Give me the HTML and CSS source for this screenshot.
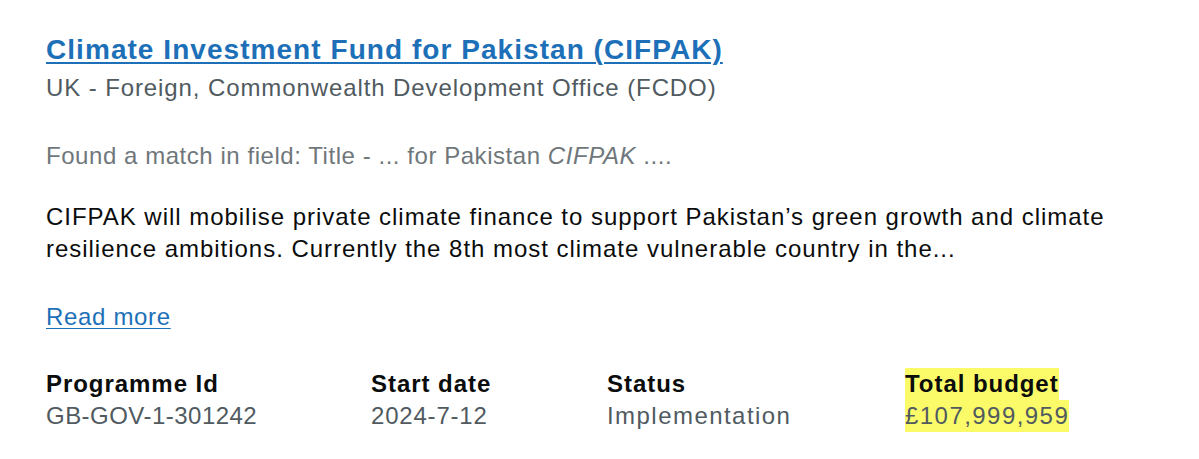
FILE: index.html
```html
<!DOCTYPE html>
<html lang="en">
<head>
<meta charset="utf-8">
<title>Climate Investment Fund for Pakistan (CIFPAK)</title>
<link rel="stylesheet" href="styles.css">
</head>
<body>
<div class="result">
  <h3 class="result-title"><a class="link" href="#">Climate Investment Fund for Pakistan (CIFPAK)</a></h3>
  <p class="result-org">UK - Foreign, Commonwealth Development Office (FCDO)</p>
  <p class="result-match">Found a match in field: Title - ... for Pakistan <em>CIFPAK</em> ....</p>
  <p class="result-desc">CIFPAK will mobilise private climate finance to support Pakistan’s green growth and climate resilience ambitions. Currently the 8th most climate vulnerable country in the...</p>
  <p class="result-more"><a class="link" href="#">Read more</a></p>
  <dl class="meta">
    <div class="meta-item">
      <dt class="meta-label">Programme Id</dt>
      <dd class="meta-value meta-value--id">GB-GOV-1-301242</dd>
    </div>
    <div class="meta-item">
      <dt class="meta-label">Start date</dt>
      <dd class="meta-value">2024-7-12</dd>
    </div>
    <div class="meta-item">
      <dt class="meta-label">Status</dt>
      <dd class="meta-value meta-value--wide">Implementation</dd>
    </div>
    <div class="meta-item meta-item--highlight">
      <dt class="meta-label"><span class="hl">Total budget</span></dt>
      <dd class="meta-value meta-value--wide"><span class="hl">£107,999,959</span></dd>
    </div>
  </dl>
</div>
</body>
</html>
```
FILE: styles.css
```css
html, body {
  margin: 0;
  padding: 0;
  background: #ffffff;
}
body {
  font-family: "Liberation Sans", Arial, sans-serif;
  color: #0b0c0c;
}
.result {
  padding: 34px 40px 0 46px;
}
.result-title {
  margin: 0;
  font-size: 28px;
  line-height: 32px;
  font-weight: 700;
  letter-spacing: 1.05px;
}
.link {
  color: #1d70b8;
  text-decoration: underline;
  text-decoration-thickness: 2px;
  text-underline-offset: 3px;
}
.result-more .link {
  text-decoration-thickness: 1px;
}
.result-org {
  margin: 6px 0 0;
  font-size: 24px;
  line-height: 32px;
  color: #505a5f;
  letter-spacing: 0.9px;
}
.result-match {
  margin: 36px 0 0;
  font-size: 24px;
  line-height: 32px;
  color: #6f777b;
  letter-spacing: 0.55px;
}
.result-desc {
  margin: 29px 0 0;
  font-size: 24px;
  line-height: 32px;
  color: #0b0c0c;
  letter-spacing: 0.97px;
  max-width: 1110px;
}
.result-more {
  margin: 36px 0 0;
  font-size: 24px;
  line-height: 32px;
  letter-spacing: 0.67px;
}
.meta {
  margin: 35px 0 0;
  display: grid;
  grid-template-columns: 325px 236px 298px auto;
}
.meta-item {
  display: flex;
  flex-direction: column;
  align-items: flex-start;
}
.meta-label {
  margin: 0;
  font-size: 24px;
  line-height: 32px;
  font-weight: 700;
  color: #0b0c0c;
  letter-spacing: 0.95px;
}
.meta-value {
  margin: 0;
  font-size: 24px;
  line-height: 32px;
  color: #505a5f;
  letter-spacing: 0.8px;
}
.meta-value--id {
  letter-spacing: 0.47px;
}
.meta-value--wide {
  letter-spacing: 1.45px;
}
.hl {
  display: inline-block;
  background: #fbfb6a;
}
```
